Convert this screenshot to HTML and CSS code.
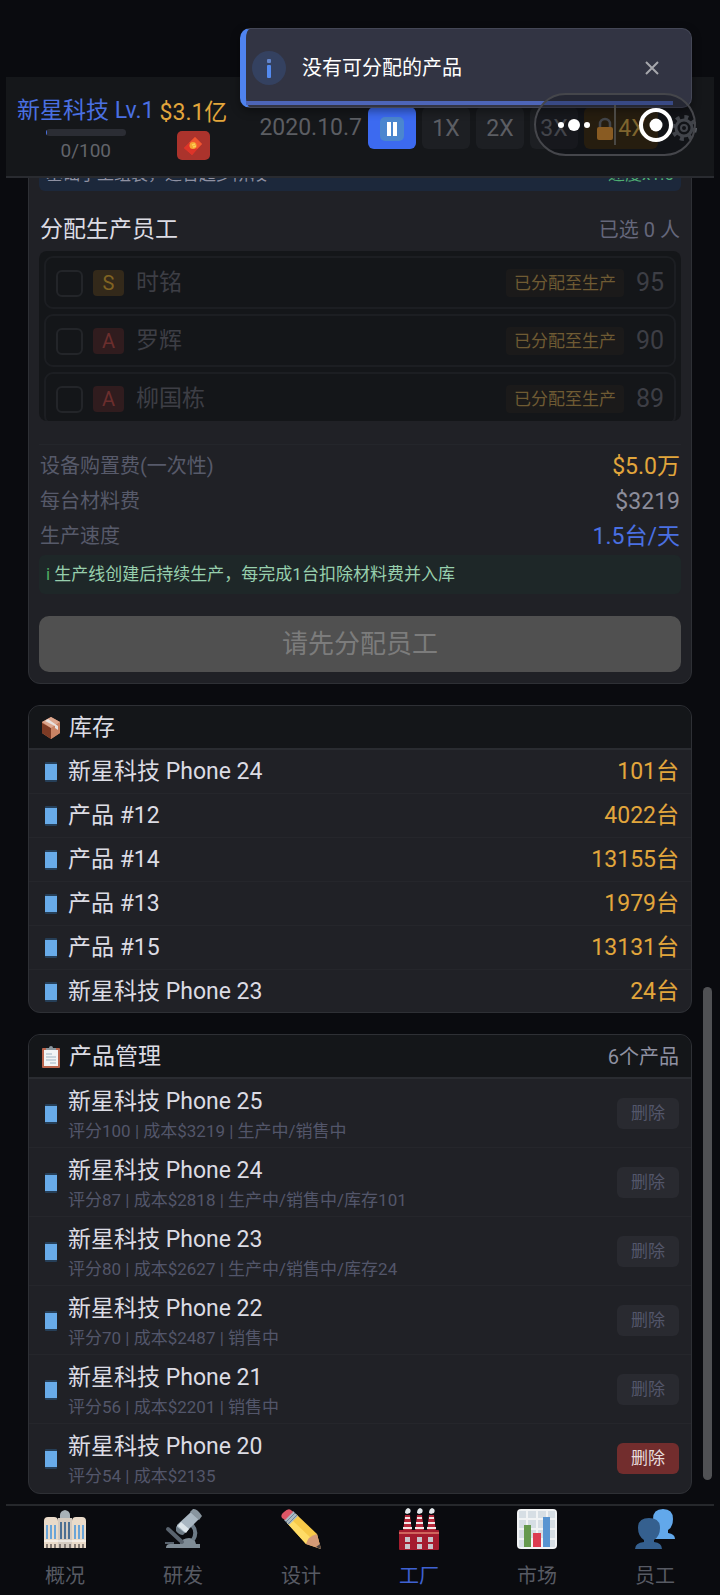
FILE: index.html
```html
<!DOCTYPE html>
<html lang="zh-CN">
<head>
    <meta charset="UTF-8">
    <meta name="viewport" content="width=device-width, initial-scale=1.0">
    <title>新星科技 - 工厂</title>
    <link rel="stylesheet" href="styles.css">
</head>
<body>
    <svg width="0" height="0" class="defs" aria-hidden="true">
        <symbol id="phone" viewBox="0 0 12 20">
            <rect width="12" height="20" rx="1" fill="#263f58"/>
            <rect y="2" width="12" height="16" fill="#68abe9"/>
        </symbol>
    </svg>

    <div class="app">
        <header class="topbar">
            <div class="company">
                <div class="company-name">新星科技 Lv.1</div>
                <div class="exp-bar"><div class="exp-fill"></div></div>
                <div class="exp-text">0/100</div>
            </div>
            <div class="money">
                <div class="money-value">$3.1亿</div>
                <button class="gift-btn" aria-label="红包">
                    <svg width="20" height="20" viewBox="0 0 20 20">
                        <path d="M12 1 19 8 9 19 1 12Z" fill="#e83a2b"/>
                        <path d="M12 1 19 8 14 13 6 7Z" fill="#f0562f"/>
                        <path d="M6 7 14 13 9 19 1 12Z" fill="#de3429"/>
                        <circle cx="10" cy="9.500" r="3.500" fill="#f6a431"/>
                        <path d="M9 9 12 8M10 11 13 10" stroke="#fbd05a" stroke-width="1.500"/>
                    </svg>
                </button>
            </div>
            <div class="time-controls">
                <span class="date">2020.10.7</span>
                <button class="speed active" aria-label="暂停">
                    <svg width="24" height="24" viewBox="0 0 24 24">
                        <rect width="24" height="24" rx="5" fill="#4b86cf"/>
                        <path d="M7 5h4v14H7zM13 5h4v14h-4z" fill="#fff"/>
                    </svg>
                </button>
                <button class="speed">1X</button>
                <button class="speed">2X</button>
                <button class="speed">3X</button>
                <button class="speed locked">
                    <svg width="18" height="24" viewBox="0 0 18 24">
                        <path d="M4 11V7a5 5 0 0 1 10 0v4" fill="none" stroke="#5c5f64" stroke-width="2.500"/>
                        <rect x="1" y="10" width="16" height="13" rx="2" fill="#c07f2a"/>
                    </svg>4X
                </button>
                <button class="gear" aria-label="设置">
                    <svg width="28" height="28" viewBox="0 0 28 28" fill="none" stroke="#5a5e64">
                        <circle cx="14" cy="14" r="8" stroke-width="3"/>
                        <circle cx="14" cy="14" r="11" stroke-width="4" stroke-dasharray="4 4.640"/>
                        <circle cx="14" cy="14" r="3" stroke-width="2"/>
                    </svg>
                </button>
            </div>
        </header>

        <main class="content">
            <section class="card create-card">
                <div class="process">
                    <span>基础手工组装，适合起步阶段</span>
                    <span class="process-speed">速度x1.0</span>
                </div>
                <div class="staff-head">
                    <h2>分配生产员工</h2>
                    <span>已选 0 人</span>
                </div>
                <div class="staff-list">
                    <label class="staff">
                        <input type="checkbox" disabled>
                        <span class="grade grade-s">S</span>
                        <span class="staff-name">时铭</span>
                        <span class="tag">已分配至生产</span>
                        <span class="score">95</span>
                    </label>
                    <label class="staff">
                        <input type="checkbox" disabled>
                        <span class="grade grade-a">A</span>
                        <span class="staff-name">罗辉</span>
                        <span class="tag">已分配至生产</span>
                        <span class="score">90</span>
                    </label>
                    <label class="staff">
                        <input type="checkbox" disabled>
                        <span class="grade grade-a">A</span>
                        <span class="staff-name">柳国栋</span>
                        <span class="tag">已分配至生产</span>
                        <span class="score">89</span>
                    </label>
                </div>
                <dl class="costs">
                    <div><dt>设备购置费(一次性)</dt><dd class="gold">$5.0万</dd></div>
                    <div><dt>每台材料费</dt><dd>$3219</dd></div>
                    <div><dt>生产速度</dt><dd class="blue">1.5台/天</dd></div>
                </dl>
                <p class="hint"><b>i</b> 生产线创建后持续生产，每完成1台扣除材料费并入库</p>
                <button class="create-btn" disabled>请先分配员工</button>
            </section>

            <section class="card">
                <div class="card-head">
                    <svg width="20" height="24" viewBox="0 0 20 24">
                        <path d="M10 1 19 6v11l-9 6-9-6V6Z" fill="#c47a58"/>
                        <path d="M1 7 10 12v11l-9-6Z" fill="#7d3b25"/>
                        <path d="M10 12 19 7v10l-9 6Z" fill="#c98364"/>
                        <path d="M1 6 10 1l9 5-9 6Z" fill="#dca78f"/>
                        <path d="M4 5 7 3l10 7v4l-3-2v-2Z" fill="#e8e3e1"/>
                    </svg>
                    <h2>库存</h2>
                </div>
                <ul class="stock">
                    <li><svg class="phone"><use href="#phone"/></svg><span class="name">新星科技 Phone 24</span><span class="qty">101台</span></li>
                    <li><svg class="phone"><use href="#phone"/></svg><span class="name">产品 #12</span><span class="qty">4022台</span></li>
                    <li><svg class="phone"><use href="#phone"/></svg><span class="name">产品 #14</span><span class="qty">13155台</span></li>
                    <li><svg class="phone"><use href="#phone"/></svg><span class="name">产品 #13</span><span class="qty">1979台</span></li>
                    <li><svg class="phone"><use href="#phone"/></svg><span class="name">产品 #15</span><span class="qty">13131台</span></li>
                    <li><svg class="phone"><use href="#phone"/></svg><span class="name">新星科技 Phone 23</span><span class="qty">24台</span></li>
                </ul>
            </section>

            <section class="card">
                <div class="card-head">
                    <svg width="20" height="24" viewBox="0 0 20 24">
                        <rect x="1" y="3" width="18" height="20" rx="1" fill="#b9644c"/>
                        <rect x="3" y="5" width="14" height="16" fill="#f2f4f5"/>
                        <path d="M5 5V3h3a2 2 0 0 1 4 0h3v2Z" fill="#8b979f"/>
                        <path d="M5 9h6M5 12h10M5 15h10M9 18h6" stroke="#9fb4c2"/>
                    </svg>
                    <h2>产品管理</h2>
                    <span class="count">6个产品</span>
                </div>
                <ul class="products">
                    <li>
                        <svg class="phone"><use href="#phone"/></svg>
                        <div class="info"><div class="name">新星科技 Phone 25</div><div class="meta">评分100 | 成本$3219 | 生产中/销售中</div></div>
                        <button class="delete" disabled>删除</button>
                    </li>
                    <li>
                        <svg class="phone"><use href="#phone"/></svg>
                        <div class="info"><div class="name">新星科技 Phone 24</div><div class="meta">评分87 | 成本$2818 | 生产中/销售中/库存101</div></div>
                        <button class="delete" disabled>删除</button>
                    </li>
                    <li>
                        <svg class="phone"><use href="#phone"/></svg>
                        <div class="info"><div class="name">新星科技 Phone 23</div><div class="meta">评分80 | 成本$2627 | 生产中/销售中/库存24</div></div>
                        <button class="delete" disabled>删除</button>
                    </li>
                    <li>
                        <svg class="phone"><use href="#phone"/></svg>
                        <div class="info"><div class="name">新星科技 Phone 22</div><div class="meta">评分70 | 成本$2487 | 销售中</div></div>
                        <button class="delete" disabled>删除</button>
                    </li>
                    <li>
                        <svg class="phone"><use href="#phone"/></svg>
                        <div class="info"><div class="name">新星科技 Phone 21</div><div class="meta">评分56 | 成本$2201 | 销售中</div></div>
                        <button class="delete" disabled>删除</button>
                    </li>
                    <li>
                        <svg class="phone"><use href="#phone"/></svg>
                        <div class="info"><div class="name">新星科技 Phone 20</div><div class="meta">评分54 | 成本$2135</div></div>
                        <button class="delete">删除</button>
                    </li>
                </ul>
            </section>
        </main>

        <nav class="tabs">
            <a href="#overview">
                <svg width="44" height="44" viewBox="0 0 44 44">
                    <path d="M1 13q0-4 4-4h6q4 0 4 4v27H1ZM29 13q0-4 4-4h6q4 0 4 4v27H29Z" fill="#eadbc9"/>
                    <path d="M15 10h14v30H15Z" fill="#d5cbc0"/>
                    <path d="M17 10V7q0-4 5-5 5 1 5 5v3Z" fill="#a8b2b8"/>
                    <path d="M4 17v14M8 17v14M12 17v14M32 17v14M36 17v14M40 17v14" stroke="#6aa5d8" stroke-width="2"/>
                    <path d="M18 14v17M22 14v17M26 14v17" stroke="#4c6f92" stroke-width="2"/>
                    <path d="M1 33h42" stroke="#fff" stroke-width="1"/>
                    <path d="M4 36v4M8 36v4M12 36v4M17 36v4M22 36v4M27 36v4M32 36v4M36 36v4M40 36v4" stroke="#665e5a" stroke-width="1.500"/>
                </svg>
                <span>概况</span>
            </a>
            <a href="#research">
                <svg width="44" height="44" viewBox="0 0 44 44">
                    <path d="M5 40q0-4 4-4h10q2-6 9-6 6 0 7 6h4v4Z" fill="#7f8c96"/>
                    <path d="M31 17q6 7 1 15" fill="none" stroke="#6d7b87" stroke-width="4"/>
                    <path d="M7 21 21 34" stroke="#59636e" stroke-width="4" stroke-linecap="round"/>
                    <path d="M4 35h9" stroke="#59636e" stroke-width="2"/>
                    <path d="M16 17 30 4l8 7-14 14q-4 0-8-4Z" fill="#a9b7c2"/>
                    <path d="M15 18 24 25l-2 2q-4 0-7-4Z" fill="#6e7c87"/>
                    <path d="M20 14 28 21l-3 4-8-7Z" fill="#dce5ea"/>
                    <path d="M32 1q4-1 9 7l-3 4-9-8Z" fill="#88959f"/>
                </svg>
                <span>研发</span>
            </a>
            <a href="#design">
                <svg width="44" height="44" viewBox="0 0 44 44">
                    <path d="m8 15 9-9 21 20 4 15-15-5Z" fill="#f7c948"/>
                    <path d="M12 11 33 31l-6 5L8 15Z" fill="#ffdc66"/>
                    <path d="M27 36q2-8 11-10l4 15Z" fill="#d59b77"/>
                    <path d="m37 39 4-3 1 5Z" fill="#4a4141"/>
                    <path d="m5 12 9-9 5 5-9 9Z" fill="#aab8c2"/>
                    <path d="m7 14 9-9M9 16l9-9" stroke="#6c8598" stroke-width="1"/>
                    <path d="M3 10Q1 7 5 4q4-4 7-2l2 2-8 8Z" fill="#dd5666"/>
                </svg>
                <span>设计</span>
            </a>
            <a href="#factory" class="current">
                <svg width="44" height="44" viewBox="0 0 44 44">
                    <path d="M8 7h5l2 17H6ZM20 7h5l2 17h-9ZM32 7h5l2 17h-9Z" fill="#b5283a"/>
                    <path d="M8 10h5M7 15h7M6 20h9M20 10h5M19 15h7M18 20h9M32 10h5M31 15h7M30 20h9" stroke="#f3e8e8" stroke-width="2"/>
                    <path d="M8 5q0-4 3-5 4 1 2 5l-3 1ZM20 5q0-4 3-5 4 1 2 5l-3 1ZM32 5q0-4 3-5 4 1 2 5l-3 1Z" fill="#e4e9ec"/>
                    <rect x="2" y="22" width="40" height="20" rx="1" fill="#a51c2e"/>
                    <path d="M2 25h40" stroke="#d0655d" stroke-width="2"/>
                    <path d="M8 29h5v5H8zM20 29h5v5h-5zM31 29h5v5h-5zM8 36h5v5H8zM20 36h5v5h-5zM31 36h5v5h-5z" fill="#c7c5cb"/>
                </svg>
                <span>工厂</span>
            </a>
            <a href="#market">
                <svg width="44" height="44" viewBox="0 0 44 44">
                    <rect x="2" y="1" width="40" height="40" rx="4" fill="#f1f3f4"/>
                    <path d="M4 3h7v7H4zM13 3h8v7h-8zM23 3h8v7h-8zM33 3h7v7h-7zM4 12h7v8H4zM13 12h8v8h-8zM23 12h8v8h-8zM33 12h7v8h-7zM4 22h7v8H4zM13 22h8v8h-8zM23 22h8v8h-8zM33 22h7v8h-7zM4 32h7v7H4zM33 32h7v7h-7z" fill="#d6dee4"/>
                    <path d="M9 17h7v22H9z" fill="#65994d"/>
                    <path d="M18 25h8v14h-8z" fill="#dc3c50"/>
                    <path d="M28 9h7v30h-7z" fill="#5894d1"/>
                </svg>
                <span>市场</span>
            </a>
            <a href="#staff">
                <svg width="44" height="44" viewBox="0 0 44 44">
                    <path d="M20 11q0-10 10-10t10 10q0 8-5 11v3q7 1 7 6H18V22q2-4 2-11Z" fill="#62a8eb"/>
                    <path d="M5 20q0-10 11-10t11 10q0 8-6 12v2q8 1 8 7H2q0-6 9-7v-2q-6-4-6-12Z" fill="#35608f"/>
                </svg>
                <span>员工</span>
            </a>
        </nav>

        <div class="toast" role="status">
            <span class="toast-icon">
                <svg width="34" height="34" viewBox="0 0 34 34">
                    <rect x="15" y="8" width="4" height="4" rx="1" fill="#6385cb"/>
                    <rect x="15" y="14" width="4" height="13" rx="1" fill="#538af0"/>
                </svg>
            </span>
            <span class="toast-text">没有可分配的产品</span>
            <button class="toast-close" aria-label="关闭">
                <svg width="14" height="14" viewBox="0 0 14 14"><path d="M1 1 13 13M13 1 1 13" stroke="#a6a7ac" stroke-width="2"/></svg>
            </button>
            <div class="toast-progress"></div>
        </div>

        <div class="capsule">
            <button aria-label="更多">
                <svg width="34" height="34" viewBox="0 0 34 34" fill="#fff">
                    <circle cx="4" cy="17" r="3"/><circle cx="17" cy="17" r="6"/><circle cx="30" cy="17" r="3"/>
                </svg>
            </button>
            <span class="capsule-line"></span>
            <button aria-label="退出">
                <svg width="34" height="34" viewBox="0 0 34 34">
                    <circle cx="17" cy="17" r="15" fill="none" stroke="#fff" stroke-width="4"/>
                    <circle cx="17" cy="17" r="6.500" fill="#fff"/>
                </svg>
            </button>
        </div>
        <div class="scroll-thumb"></div>
    </div>
</body>
</html>
```
FILE: styles.css
```css
* {
    box-sizing: border-box;
}
body {
    margin: 0;
    background: #0a0b0f;
    color: #dcdce4;
    font-family: Roboto, "Noto Sans CJK SC", sans-serif;
    font-size: 23px;
    line-height: 30px;
}
h2, p, ul, dl, dd {
    margin: 0;
    padding: 0;
}
h2 {
    font-size: 23px;
    font-weight: 400;
}
ul {
    list-style: none;
}
button {
    border: none;
    padding: 0;
    font: inherit;
    color: inherit;
    background: none;
    cursor: pointer;
}
svg {
    display: block;
    flex: none;
}
.defs {
    position: absolute;
}
.app {
    position: relative;
    min-height: 100vh;
    padding: 77px 6px 0;
    display: flex;
    flex-direction: column;
}

/* top bar */
.topbar {
    display: flex;
    gap: 5px;
    height: 101px;
    padding: 19px 16px 0 11px;
    background: #15171a;
    border-bottom: 2px solid #292b30;
}
.company, .money {
    display: flex;
    flex-direction: column;
    align-items: center;
    white-space: nowrap;
}
.company-name {
    color: #4a70e2;
}
.exp-bar {
    width: 80px;
    height: 7px;
    margin: 3px 0 5px;
    border-radius: 4px;
    background: #2b2d34;
    overflow: hidden;
}
.exp-fill {
    width: 1px;
    height: 100%;
    background: #4a70e2;
}
.exp-text {
    font-size: 19px;
    line-height: 20px;
    color: #62646a;
}
.money-value {
    line-height: 34px;
    color: #e2a63c;
}
.gift-btn {
    display: flex;
    align-items: center;
    justify-content: center;
    width: 33px;
    height: 29px;
    margin-top: 1px;
    border-radius: 5px;
    background: #ab332c;
}
.time-controls {
    display: flex;
    align-items: center;
    gap: 6px;
    height: 42px;
    margin: 11px 0 0 auto;
    color: #5c5e63;
}
.speed {
    min-width: 48px;
    height: 42px;
    padding: 1px 0 0;
    border-radius: 6px;
    background: #1d1f23;
    display: flex;
    align-items: center;
    justify-content: center;
    gap: 4px;
}
.speed.active {
    background: #3c6af0;
}
.speed.locked {
    min-width: 74px;
    margin-right: 6px;
    background: #33260f;
    color: #b08c3c;
}

/* cards */
.content {
    flex: 1;
    overflow: hidden;
    padding: 0 22px 10px;
}
.card {
    margin-bottom: 21px;
    border: 1px solid #2e3035;
    border-radius: 12px;
    background: #202126;
    overflow: hidden;
}
.card:last-child {
    margin-bottom: 0;
}
.card-head {
    display: flex;
    align-items: center;
    gap: 8px;
    height: 44px;
    padding: 1px 12px 0;
    background: #141619;
    border-bottom: 2px solid #2a2c31;
}
.count {
    margin-left: auto;
    font-size: 20px;
    color: #8f91a2;
}
.create-card {
    margin-top: -26px;
    padding: 0 10px 11px;
}
.process {
    display: flex;
    justify-content: space-between;
    padding: 8px 7px 3px;
    border-radius: 6px;
    background: #1c283b;
    font-size: 17px;
    line-height: 27px;
    color: #8f91a2;
}
.process-speed {
    color: #4fae73;
}
.staff-head {
    display: flex;
    justify-content: space-between;
    padding: 24px 1px 6px;
}
.staff-head span {
    font-size: 20px;
    color: #65677b;
}
.staff-list {
    height: 170px;
    padding: 5px;
    border-radius: 8px;
    background: #141619;
    overflow: hidden;
}
.staff {
    display: flex;
    align-items: center;
    height: 53px;
    margin-bottom: 5px;
    padding: 1px 10px 0;
    border: 2px solid #1c1e22;
    border-radius: 9px;
    color: #3d3e45;
}
.staff input {
    appearance: none;
    width: 27px;
    height: 27px;
    margin: 0 10px 0 0;
    border: 2px solid #232529;
    border-radius: 6px;
}
.grade {
    width: 31px;
    height: 26px;
    border-radius: 4px;
    font-size: 20px;
    line-height: 26px;
    text-align: center;
}
.grade-s {
    background: #33291a;
    color: #806322;
}
.grade-a {
    background: #301c1e;
    color: #6b2e2d;
}
.staff-name {
    margin-left: 12px;
}
.tag {
    margin: 0 12px 0 auto;
    padding: 0 8px;
    border-radius: 4px;
    background: #1b1a1a;
    font-size: 17px;
    line-height: 28px;
    color: #6f5b33;
}
.score {
    font-size: 25px;
}
.costs {
    margin-top: 23px;
    padding: 4px 1px 0;
    border-top: 1px solid #24262b;
}
.costs div {
    display: flex;
    justify-content: space-between;
    align-items: center;
    line-height: 35px;
}
.costs dt {
    font-size: 20px;
    color: #575a6a;
}
.costs dd {
    color: #8c8d9b;
}
.costs .gold {
    color: #e2a63c;
}
.costs .blue {
    color: #4a70e2;
}
.hint {
    margin: 1px 0 22px;
    padding: 6px 7px;
    border-radius: 6px;
    background: #1e2728;
    font-size: 17px;
    line-height: 27px;
    color: #97cfad;
}
.hint b {
    font-weight: 400;
    color: #4fae63;
}
.create-btn {
    display: block;
    width: 100%;
    height: 56px;
    border-radius: 10px;
    background: #505050;
    font-size: 26px;
    color: #7c7c7c;
}
.phone {
    width: 12px;
    height: 20px;
    margin: 0 11px 0 4px;
}
.stock li, .products li {
    display: flex;
    align-items: center;
    height: 44px;
    padding: 1px 12px 0;
    border-bottom: 1px solid #25262b;
}
.stock li:last-child {
    height: 42px;
    border-bottom: none;
}
.qty {
    margin-left: auto;
    color: #e2a63c;
}
.products li {
    height: 69px;
}
.products li:last-child {
    border-bottom-color: transparent;
}
.info {
    padding-top: 5px;
}
.meta {
    font-size: 17px;
    line-height: 28px;
    color: #53566a;
}
.delete {
    width: 62px;
    height: 31px;
    margin-left: auto;
    border-radius: 6px;
    background: #722d2d;
    font-size: 17px;
    line-height: 31px;
    color: #e8dcdc;
}
.delete:disabled {
    background: #292a30;
    color: #53566a;
}

/* bottom tabs */
.tabs {
    display: grid;
    grid-template-columns: repeat(6, 1fr);
    height: 91px;
    border-top: 2px solid #26282c;
}
.tabs a {
    display: flex;
    flex-direction: column;
    align-items: center;
    gap: 9px;
    padding-top: 2px;
    font-size: 20px;
    color: #575a63;
    text-decoration: none;
}
.tabs .current {
    color: #3f62d2;
}

/* overlays */
.toast {
    position: absolute;
    top: 28px;
    left: 240px;
    right: 28px;
    height: 80px;
    display: flex;
    align-items: center;
    padding: 0 32px 0 6px;
    border: 1px solid #444756;
    border-left: 6px solid #4f83ef;
    border-radius: 10px;
    background: #323443;
    box-shadow: 0 3px 10px rgba(0, 0, 0, 0.4);
    color: #fff;
}
.toast-icon {
    border-radius: 50%;
    background: #344160;
}
.toast-text {
    margin-left: 16px;
    font-size: 20px;
}
.toast-close {
    margin-left: auto;
}
.toast-progress {
    position: absolute;
    left: 0;
    bottom: 2px;
    width: 96%;
    height: 4px;
    background: #4d65b8;
}
.capsule {
    position: absolute;
    top: 93px;
    right: 24px;
    width: 162px;
    height: 63px;
    display: flex;
    align-items: center;
    justify-content: space-between;
    padding: 0 21px;
    border: 2px solid #45464b;
    border-radius: 32px;
    background: rgba(10, 11, 15, 0.3);
}
.capsule-line {
    width: 2px;
    height: 40px;
    background: #4a4844;
}
.scroll-thumb {
    position: absolute;
    right: 8px;
    bottom: 115px;
    width: 9px;
    height: 493px;
    border-radius: 5px;
    background: #505154;
}
```
